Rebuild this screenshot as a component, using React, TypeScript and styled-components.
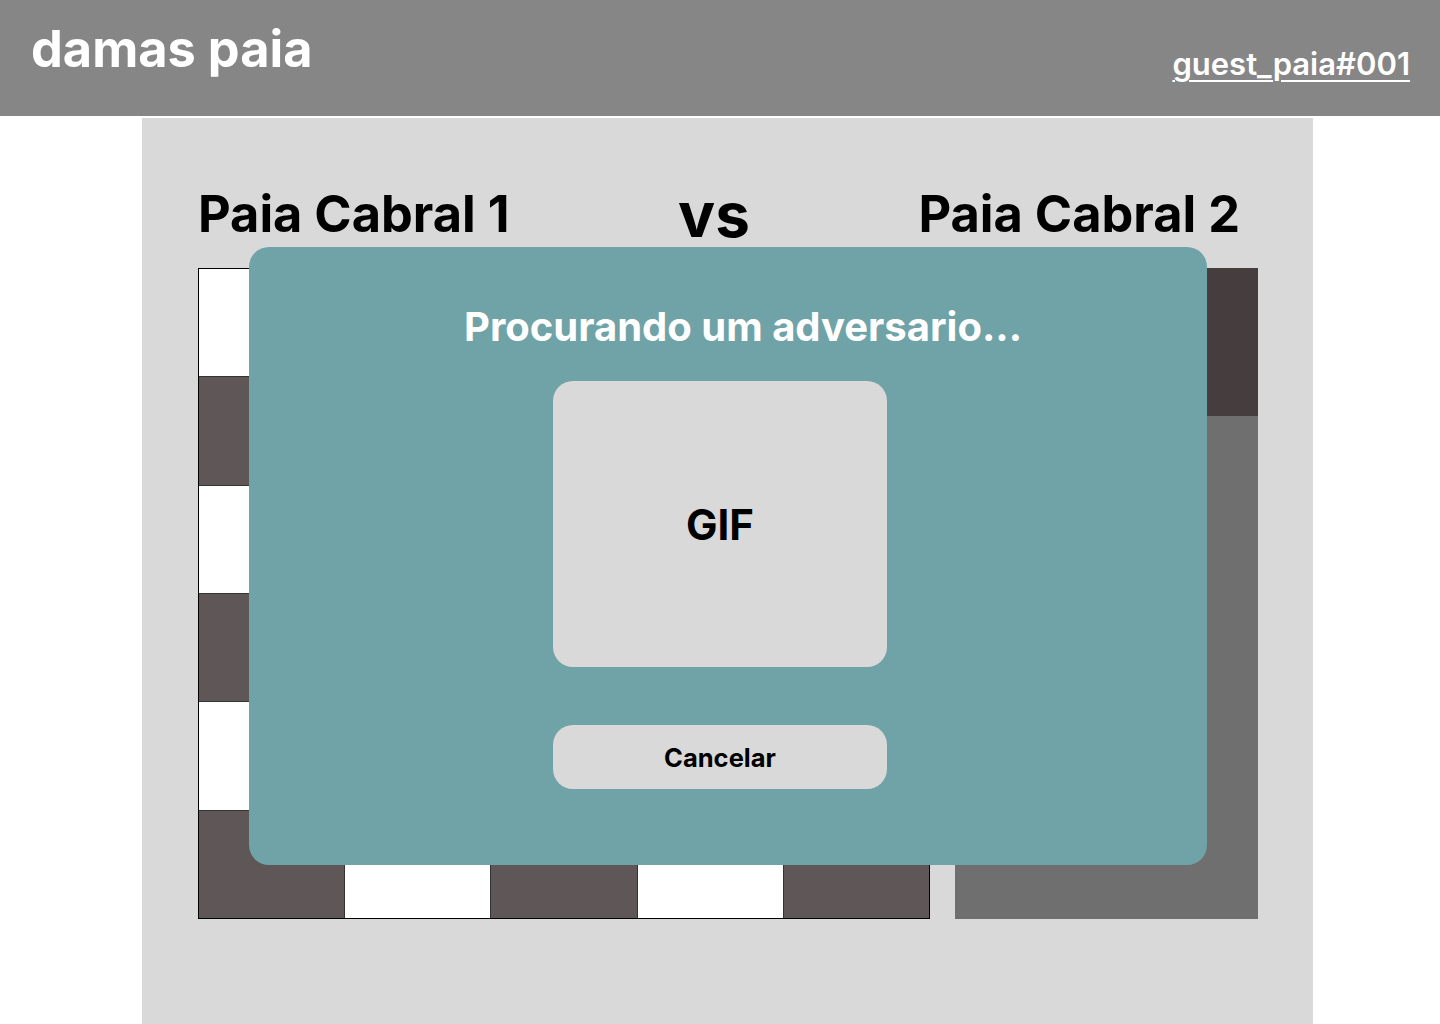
import styled, { createGlobalStyle } from 'styled-components'

const GlobalStyles = createGlobalStyle`
  * {
    box-sizing: border-box;
  }

  body {
    margin: 0;
    background: #ffffff;
    font-family: Inter, "Noto Sans", "Liberation Sans", sans-serif;
  }
`

const ROWS = 6
const COLS = 5

function App() {
  const squares = []
  for (let r = 0; r < ROWS; r++) {
    for (let c = 0; c < COLS; c++) {
      squares.push(<Square key={`${r}-${c}`} dark={(r + c) % 2 === 1} />)
    }
  }

  return (
    <>
      <GlobalStyles />
      <Header>
        <Logo>damas paia</Logo>
        <UserName href="#">guest_paia#001</UserName>
      </Header>

      <Arena>
        <Players>
          <PlayerName>Paia Cabral 1</PlayerName>
          <Versus>vs</Versus>
          <PlayerName>Paia Cabral 2</PlayerName>
        </Players>

        <GameRow>
          <Board>{squares}</Board>
          <SidePanel>
            <SideTop />
            <SideBottom />
          </SidePanel>
        </GameRow>

        <Modal>
          <ModalTitle>Procurando um adversario...</ModalTitle>
          <ModalBody>
            <GifBox>GIF</GifBox>
            <CancelButton>Cancelar</CancelButton>
          </ModalBody>
        </Modal>
      </Arena>
    </>
  )
}

const Header = styled.header`
  height: 116px;
  background: #868686;
  padding: 19px 30px 0 31px;
  display: flex;
  justify-content: space-between;
  align-items: flex-start;
`

const Logo = styled.h1`
  margin: 0;
  font-size: 50.5px;
  font-weight: 700;
  line-height: 60px;
  color: #ffffff;
`

const UserName = styled.a`
  margin-top: 26px;
  font-size: 31px;
  font-weight: 600;
  line-height: 37px;
  color: #ffffff;
  text-decoration: underline;
  text-decoration-thickness: 2px;
  text-underline-offset: 5px;
`

const Arena = styled.main`
  position: relative;
  width: 1171px;
  min-height: 906px;
  margin: 2px 0 0 142px;
  background: #d9d9d9;
  padding: 65px 55px 105px 56px;
`

const Players = styled.div`
  display: flex;
  justify-content: space-between;
  align-items: flex-start;
  height: 85px;
  padding-right: 18px;
`

const PlayerName = styled.h2`
  margin: 0;
  font-size: 50.5px;
  font-weight: 700;
  line-height: 62px;
  color: #000000;
`

const Versus = styled.span`
  margin-top: -6px;
  font-size: 62px;
  font-weight: 700;
  line-height: 75px;
  color: #000000;
`

const GameRow = styled.div`
  display: flex;
  gap: 25px;
  height: 651px;
`

const Board = styled.div`
  flex: none;
  width: 732px;
  height: 100%;
  display: grid;
  grid-template-columns: repeat(${COLS}, 1fr);
  grid-template-rows: repeat(${ROWS}, 1fr);
  gap: 1px;
  border: 1px solid #000000;
  background: #333333;
`

const Square = styled.div<{ dark: boolean }>`
  background: ${props => (props.dark ? '#5f5757' : '#ffffff')};
`

const SidePanel = styled.aside`
  flex: none;
  width: 303px;
  display: flex;
  flex-direction: column;
`

const SideTop = styled.div`
  height: 148px;
  background: #453d3e;
`

const SideBottom = styled.div`
  flex: 1;
  background: #6f6f6f;
`

const Modal = styled.section`
  position: absolute;
  top: 129px;
  left: 107px;
  width: 958px;
  height: 618px;
  border-radius: 20px;
  background: #6fa3a7;
  padding-top: 56px;
  display: flex;
  flex-direction: column;
  align-items: center;
`

const ModalTitle = styled.h3`
  margin: 0 0 0 30px;
  font-size: 40px;
  font-weight: 700;
  line-height: 48px;
  color: #ffffff;
`

const ModalBody = styled.div`
  margin: 30px 16px 0 0;
  display: flex;
  flex-direction: column;
  gap: 58px;
`

const GifBox = styled.div`
  width: 334px;
  height: 286px;
  border-radius: 20px;
  background: #d9d9d9;
  display: flex;
  align-items: center;
  justify-content: center;
  font-size: 42px;
  font-weight: 700;
  color: #000000;
`

const CancelButton = styled.button`
  width: 334px;
  height: 64px;
  border: none;
  border-radius: 20px;
  background: #d9d9d9;
  font-family: inherit;
  font-size: 25.5px;
  font-weight: 700;
  color: #000000;
  cursor: pointer;
`

export default App
